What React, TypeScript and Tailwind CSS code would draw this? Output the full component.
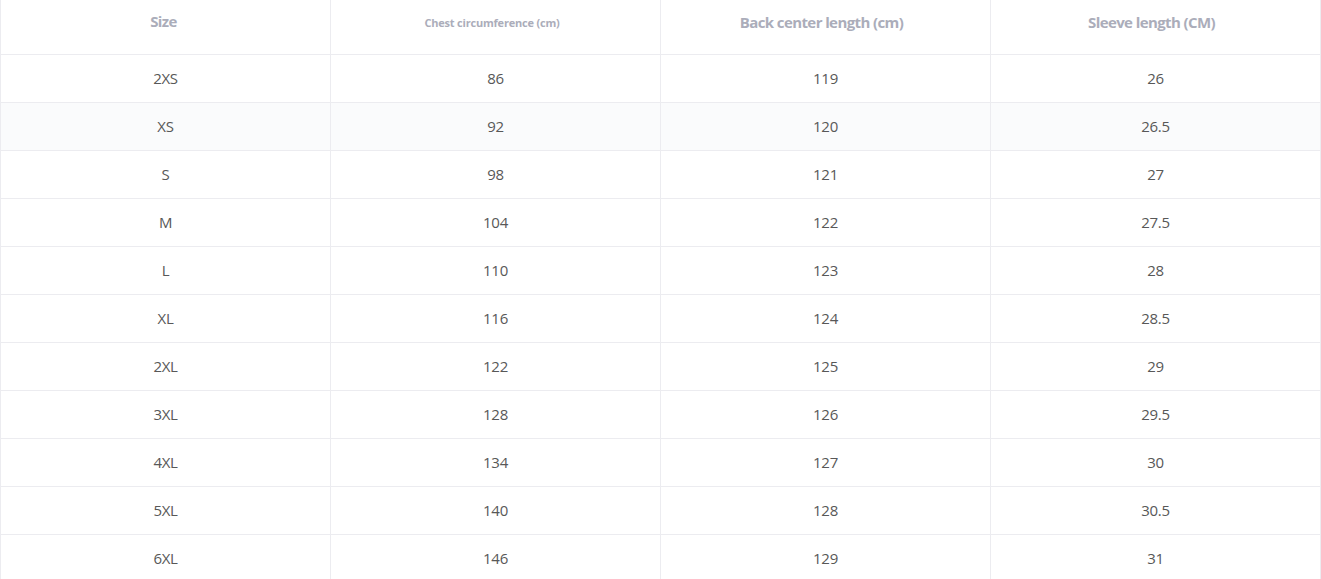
import React from 'react';

const rows: [string, string, string, string][] = [
  ['2XS', '86', '119', '26'],
  ['XS', '92', '120', '26.5'],
  ['S', '98', '121', '27'],
  ['M', '104', '122', '27.5'],
  ['L', '110', '123', '28'],
  ['XL', '116', '124', '28.5'],
  ['2XL', '122', '125', '29'],
  ['3XL', '128', '126', '29.5'],
  ['4XL', '134', '127', '30'],
  ['5XL', '140', '128', '30.5'],
  ['6XL', '146', '129', '31'],
];

const headers = [
  { label: 'Size', cls: 'text-[15px] tracking-[-0.6px] pt-[10px] pr-[4px]' },
  { label: 'Chest circumference (cm)', cls: 'text-[11px] tracking-[-0.2px] pt-[15px] pr-[7px]' },
  { label: 'Back center length (cm)', cls: 'text-[15px] tracking-[-0.6px] pt-[11px] pr-[8px]' },
  { label: 'Sleeve length (CM)', cls: 'text-[15px] tracking-[-0.6px] pt-[11px] pr-[8px]' },
];

const App: React.FC = () => {
  return (
    <div className="w-[1321px] h-[579px] overflow-hidden bg-white font-['Open_Sans',sans-serif]">
      <div className="grid grid-cols-[repeat(4,330px)] border-l border-[#ececf0]">
        {headers.map((h) => (
          <div
            key={h.label}
            className={`h-[55px] border-r border-b border-[#ececf0] flex justify-center font-bold text-[#abadba] ${h.cls}`}
          >
            {h.label}
          </div>
        ))}
        {rows.map((r, i) => (
          <React.Fragment key={r[0]}>
            {r.map((v, j) => (
              <div
                key={j}
                className={`h-[48px] border-r border-b border-[#ececf0] flex items-center justify-center text-[15px] tracking-[-0.3px] text-[#585858] ${
                  i === 1 ? 'bg-[#fafbfc]' : 'bg-white'
                }`}
              >
                {v}
              </div>
            ))}
          </React.Fragment>
        ))}
      </div>
    </div>
  );
};

export default App;
